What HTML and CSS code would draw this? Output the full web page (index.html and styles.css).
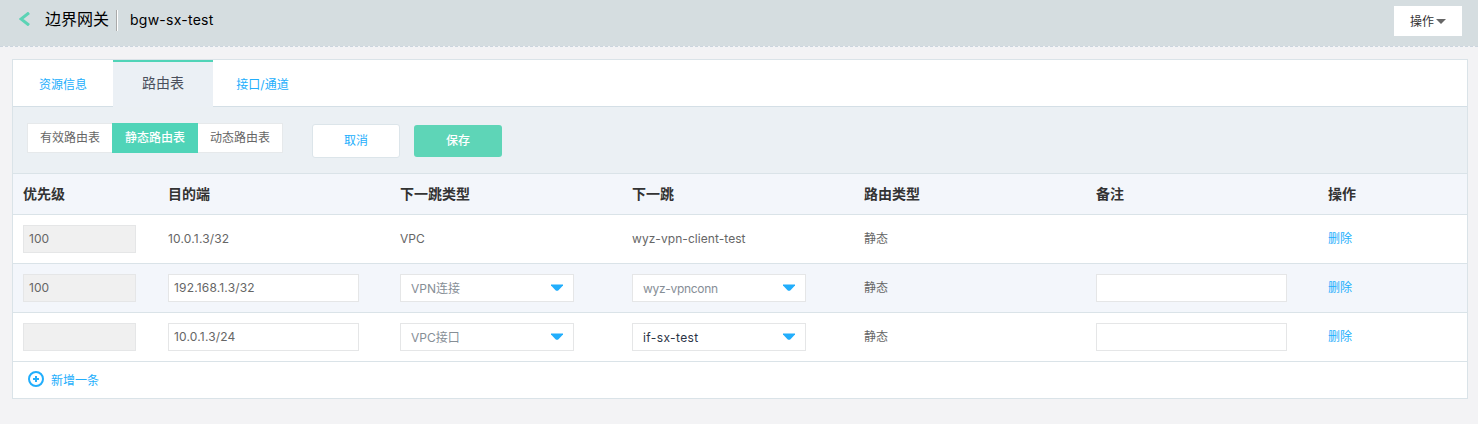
FILE: index.html
```html
<!DOCTYPE html>
<html lang="zh-CN">
<head>
<meta charset="utf-8">
<title>边界网关</title>
<link rel="stylesheet" href="styles.css">
</head>
<body>
<header class="topbar">
  <svg class="back" width="11" height="14" viewBox="0 0 11 14"><path d="M10 .8 2 7l8 6.200" fill="none" stroke="#5bd3b5" stroke-width="3"/></svg>
  <h1 class="title">边界网关</h1>
  <span class="divider"></span>
  <span class="name">bgw-sx-test</span>
  <button class="actions"><span>操作</span><svg width="10" height="5" viewBox="0 0 10 5"><path d="M0 0h10L5 5z" fill="#666"/></svg></button>
</header>
<main class="panel">
  <nav class="tabs">
    <a class="tab">资源信息</a>
    <a class="tab active">路由表</a>
    <a class="tab last">接口/通道</a>
  </nav>
  <div class="toolbar">
    <div class="segments">
      <span class="segment">有效路由表</span>
      <span class="segment selected">静态路由表</span>
      <span class="segment">动态路由表</span>
    </div>
    <button class="btn cancel">取消</button>
    <button class="btn save">保存</button>
  </div>
  <div class="row head">
    <div>优先级</div><div>目的端</div><div>下一跳类型</div><div>下一跳</div><div>路由类型</div><div>备注</div><div>操作</div>
  </div>
  <div class="row">
    <div><div class="field disabled">100</div></div>
    <div><span class="ip">10.0.1.3/32</span></div>
    <div>VPC</div>
    <div><span class="hop">wyz-vpn-client-test</span></div>
    <div>静态</div>
    <div></div>
    <div><a class="link">删除</a></div>
  </div>
  <div class="row even">
    <div><div class="field disabled">100</div></div>
    <div><div class="field wide"><span class="ip">192.168.1.3/32</span></div></div>
    <div><div class="select"><span>VPN连接</span><svg width="12" height="7" viewBox="0 0 12 7"><path d="M0 .5h12v1L7.500 6.200q-1.500 1-3 0L0 1.500z" fill="#22aefc"/></svg></div></div>
    <div><div class="select"><span class="conn">wyz-vpnconn</span><svg width="12" height="7" viewBox="0 0 12 7"><path d="M0 .5h12v1L7.500 6.200q-1.500 1-3 0L0 1.500z" fill="#22aefc"/></svg></div></div>
    <div>静态</div>
    <div><div class="field wide"></div></div>
    <div><a class="link">删除</a></div>
  </div>
  <div class="row">
    <div><div class="field disabled"></div></div>
    <div><div class="field wide"><span class="ip">10.0.1.3/24</span></div></div>
    <div><div class="select"><span>VPC接口</span><svg width="12" height="7" viewBox="0 0 12 7"><path d="M0 .5h12v1L7.500 6.200q-1.500 1-3 0L0 1.500z" fill="#22aefc"/></svg></div></div>
    <div><div class="select chosen"><span class="iface">if-sx-test</span><svg width="12" height="7" viewBox="0 0 12 7"><path d="M0 .5h12v1L7.500 6.200q-1.500 1-3 0L0 1.500z" fill="#22aefc"/></svg></div></div>
    <div>静态</div>
    <div><div class="field wide"></div></div>
    <div><a class="link">删除</a></div>
  </div>
  <div class="add">
    <svg width="16" height="16" viewBox="0 0 16 16" fill="none" stroke="#22aefc" stroke-width="2"><circle cx="8" cy="8" r="7"/><path d="M8 5v6M5 8h6"/></svg>
    <span>新增一条</span>
  </div>
</main>
</body>
</html>
```
FILE: styles.css
```css
* { box-sizing: border-box; }
body {
  margin: 0;
  background: #f3f3f5;
  color: #666;
  font: 12px/18px Inter, "Noto Sans CJK SC", sans-serif;
}
button { font: inherit; border: 0; padding: 0; }
.topbar {
  display: flex;
  align-items: flex-start;
  height: 47px;
  background: #d5dde0;
  background-clip: padding-box;
  border-bottom: 1px dashed #cbd5de;
}
.back { margin: 12px 0 0 19px; }
.title {
  width: 64px;
  margin: 8px 0 0 15px;
  font-size: 16px;
  font-weight: 400;
  line-height: 22px;
  color: #000;
  white-space: nowrap;
}
.divider {
  width: 2px;
  height: 21px;
  margin: 10px 0 0 7px;
  background: #aaa;
  border-right: 1px solid #fff;
}
.name {
  margin: 10px 0 0 12px;
  font-size: 14px;
  line-height: 20px;
  letter-spacing: 0.25px;
  color: #000;
}
.actions {
  display: flex;
  align-items: center;
  justify-content: center;
  gap: 2px;
  width: 68px;
  height: 30px;
  margin: 6px 16px 0 auto;
  background: #fff;
  color: #333;
}
.actions span { padding-top: 2px; }
.panel {
  width: 1456px;
  height: 340px;
  margin: 12px 0 0 12px;
  border: 1px solid #dae3e8;
  background: #fff;
}
.tabs {
  display: flex;
  height: 47px;
  background: linear-gradient(#d4dfe6, #d4dfe6) bottom / 100% 1px no-repeat;
}
.tab {
  width: 100px;
  line-height: 50px;
  text-align: center;
  color: #22aefc;
}
.last { padding-right: 1px; }
.active {
  background: #ebf0f5;
  border-top: 2px solid #50d4b8;
  font-size: 14px;
  line-height: 42px;
  color: #4a4f5c;
}
.toolbar {
  display: flex;
  align-items: flex-start;
  height: 67px;
  padding: 16px 14px 0;
  background: #ebf0f4;
  border-bottom: 1px solid #dae3e8;
}
.segments {
  display: flex;
  width: 256px;
  height: 30px;
  background: #fff;
  border: 1px solid #e6e9eb;
}
.segment {
  flex: 1;
  line-height: 28px;
  text-align: center;
}
.selected {
  flex: 0 0 86px;
  margin: -1px 0;
  line-height: 30px;
  background: #50d4b8;
  color: #fff;
  font-weight: 500;
}
.btn { border-radius: 3px; width: 88px; }
.cancel {
  height: 34px;
  margin: 1px 14px 0 29px;
  border: 1px solid #dce5ea;
  background: #fff;
  color: #22aefc;
}
.save {
  height: 32px;
  margin-top: 2px;
  background: #5ed5b7;
  color: #fff;
  font-weight: 500;
}
.row {
  display: grid;
  grid-template-columns: 145px repeat(5, 232px) 149px;
  align-items: center;
  height: 49px;
  border-bottom: 1px solid #dae3e8;
}
.row > div { padding-left: 10px; }
.head {
  height: 41px;
  background: #f3f6fb;
  color: #333;
  font-size: 14px;
  font-weight: 700;
}
.even { background: #f3f6fb; }
.field {
  width: 113px;
  height: 28px;
  padding-left: 5px;
  border: 1px solid #e5e6e7;
  background: #fff;
  line-height: 26px;
}
.disabled { background: #f0f0f0; }
.wide { width: 191px; }
.ip { letter-spacing: 0.17px; }
.hop { letter-spacing: 0.06px; }
.conn { letter-spacing: -0.3px; }
.iface { letter-spacing: 0.38px; }
.select {
  display: flex;
  align-items: flex-start;
  justify-content: space-between;
  width: 174px;
  height: 28px;
  padding: 5px 10px 0;
  border: 1px solid #e5e6e7;
  background: #fff;
  color: #868e96;
}
.select svg { margin-top: 4px; }
.chosen { color: #2b3445; }
.link { color: #22aefc; }
.add {
  display: flex;
  align-items: center;
  gap: 7px;
  height: 34px;
  padding-left: 15px;
  color: #22aefc;
}
.add span { padding-top: 3px; }
```
